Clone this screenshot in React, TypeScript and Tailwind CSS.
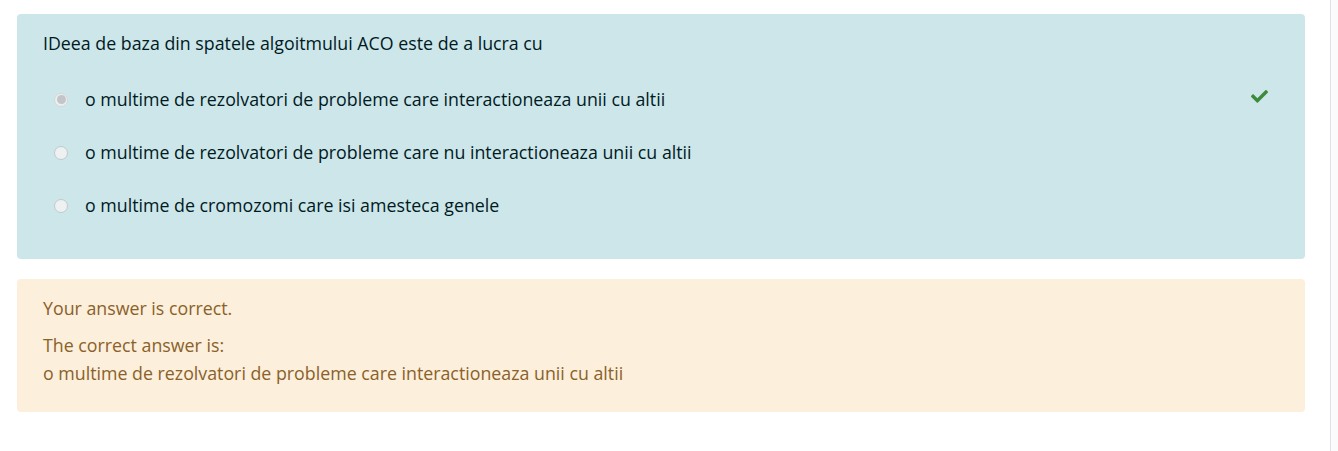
import React from 'react';

const options = [
  { text: 'o multime de rezolvatori de probleme care interactioneaza unii cu altii', checked: true },
  { text: 'o multime de rezolvatori de probleme care nu interactioneaza unii cu altii', checked: false },
  { text: 'o multime de cromozomi care isi amesteca genele', checked: false },
];

const Radio = ({ checked }: { checked: boolean }) =>
  checked ? (
    <span className="flex h-[14px] w-[14px] shrink-0 items-center justify-center rounded-full border border-[#d3d7da] bg-[#eceff0]">
      <span className="h-[9px] w-[9px] rounded-full bg-[#c2c6c9]" />
    </span>
  ) : (
    <span className="h-[14px] w-[14px] shrink-0 rounded-full border border-[#c3c9cc] bg-[#edf1f2]" />
  );

const Check = () => (
  <svg width="17" height="14" viewBox="0 0 512 420" className="shrink-0">
    <path
      fill="#3d8a3d"
      d="M173.9 405.6L7.5 239.2c-10-10-10-26.2 0-36.2l36.2-36.2c10-10 26.2-10 36.2 0L192 279.1 432.1 39c10-10 26.2-10 36.2 0l36.2 36.2c10 10 10 26.2 0 36.2L210.1 405.6c-10 10-26.2 10-36.2 0z"
    />
  </svg>
);

export default function App() {
  return (
    <div className="flex min-h-[451px] w-full bg-white" style={{ fontFamily: '"Open Sans", sans-serif' }}>
      <div className="flex w-[1330px] shrink-0 flex-col gap-[20px] pl-[17px] pr-[25px] pt-[14px]">
        <div className="rounded-[4px] bg-[#cde6ea] px-[26px] pb-[27px] pt-[18px] text-[17.8px] leading-[23px] text-[#001a1e]">
          <div className="mb-[18px]">IDeea de baza din spatele algoitmului ACO este de a lucra cu</div>
          <div className="flex flex-col">
            {options.map((o, i) => (
              <div key={i} className="flex items-center py-[15px] pl-[11px]">
                <Radio checked={o.checked} />
                <span className="ml-[17px]">{o.text}</span>
                {o.checked && (
                  <span className="ml-auto mr-[11px] -translate-y-[4px]">
                    <Check />
                  </span>
                )}
              </div>
            ))}
          </div>
        </div>
        <div className="rounded-[4px] bg-[#fcefdc] px-[26px] pb-[25px] pt-[15px] text-[17.8px] leading-[28px] text-[#8a6129]">
          <div className="mb-[9px]">Your answer is correct.</div>
          <div>The correct answer is:</div>
          <div>o multime de rezolvatori de probleme care interactioneaza unii cu altii</div>
        </div>
      </div>
      <div className="w-px shrink-0 bg-[#dee2e6]" />
      <div className="flex-1 bg-[#fbfbfb]" />
    </div>
  );
}
